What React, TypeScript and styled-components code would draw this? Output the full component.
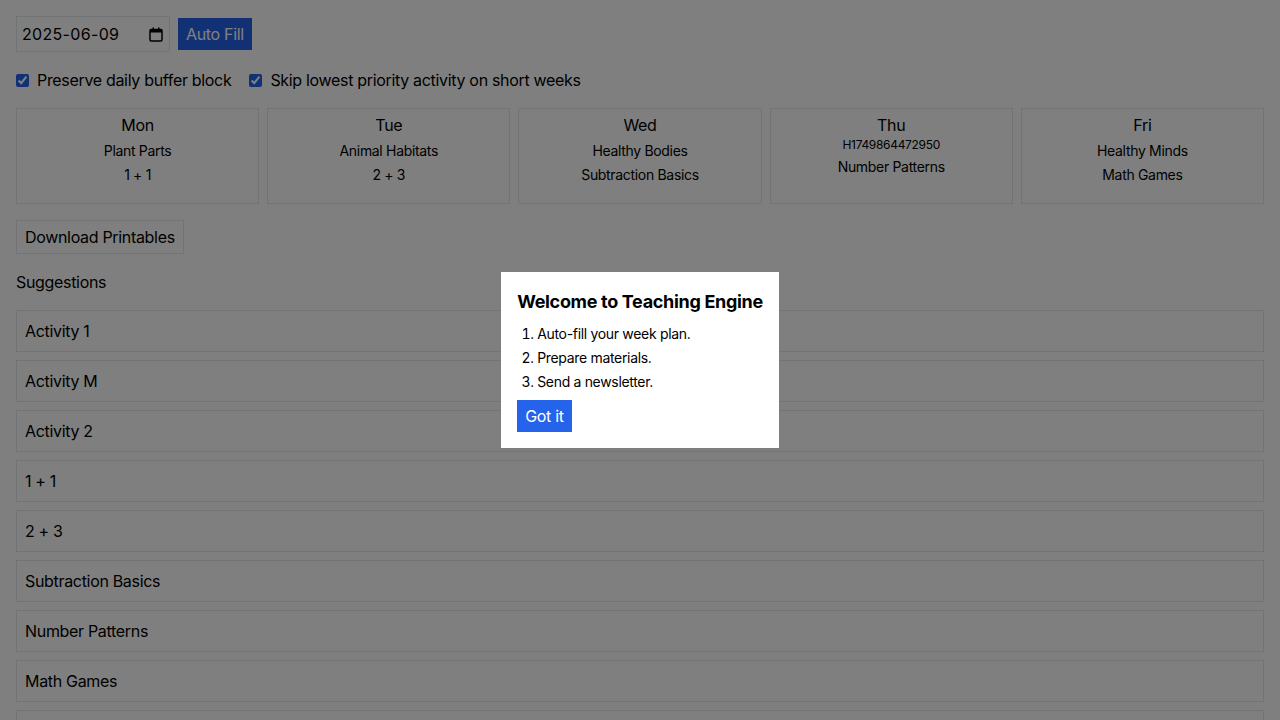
import React from "react";
import styled, { createGlobalStyle } from "styled-components";

const Global = createGlobalStyle`
  *, *::before, *::after { box-sizing: border-box; }
  html, body { margin: 0; padding: 0; }
  body {
    font-family: Inter, "Noto Sans", "Liberation Sans", sans-serif;
    font-size: 16px;
    line-height: 24px;
    letter-spacing: -0.02em;
    color: #000;
    background: #fff;
  }
  button, input { font-family: inherit; letter-spacing: inherit; margin: 0; }
`;

const Page = styled.div`
  padding: 16px;
  display: flex;
  flex-direction: column;
  gap: 16px;
`;

const Toolbar = styled.div`
  display: flex;
  align-items: center;
  gap: 8px;
`;

const DateField = styled.label`
  width: 154px;
  height: 36px;
  border: 1px solid #e5e7eb;
  padding: 0 6px 0 5px;
  display: flex;
  align-items: center;
  justify-content: space-between;
  background: #fff;
`;

const DateText = styled.input`
  width: 110px;
  border: none;
  outline: none;
  padding: 0;
  font-size: 16px;
  line-height: 24px;
  letter-spacing: 0.02em;
  color: #000;
  background: transparent;
`;

const CalendarIcon = styled.svg`
  width: 14px;
  height: 15px;
  flex: none;
`;

const PrimaryButton = styled.button`
  background: #2563eb;
  color: #fff;
  border: none;
  padding: 4px 8px;
  font-size: 16px;
  line-height: 24px;
  cursor: pointer;
`;

const Options = styled.div`
  display: flex;
  align-items: center;
  gap: 18px;
`;

const OptionLabel = styled.label`
  display: flex;
  align-items: center;
  gap: 8px;
  font-size: 16px;
  line-height: 24px;
`;

const Check = styled.input`
  width: 13px;
  height: 13px;
  accent-color: #2563eb;
`;

const Week = styled.div`
  display: grid;
  grid-template-columns: repeat(5, 1fr);
  gap: 8px;
`;

const DayCard = styled.div`
  border: 1px solid #e5e7eb;
  min-height: 96px;
  padding: 4px;
  text-align: center;
`;

const DayName = styled.div`
  font-size: 16px;
  line-height: 24px;
`;

const DayItem = styled.div`
  font-size: 14px;
  line-height: 20px;
  margin-top: 4px;
`;

const DayCode = styled.div`
  font-size: 12px;
  line-height: 16px;
`;

const OutlineButton = styled.button`
  align-self: flex-start;
  background: #fff;
  color: #000;
  border: 1px solid #e5e7eb;
  padding: 4px 8px;
  font-size: 16px;
  line-height: 24px;
`;

const Heading = styled.h2`
  margin: 0;
  font-size: 16px;
  line-height: 24px;
  font-weight: 400;
`;

const SuggestionList = styled.ul`
  list-style: none;
  margin: 0;
  padding: 0;
  display: flex;
  flex-direction: column;
  gap: 8px;
`;

const SuggestionRow = styled.li`
  border: 1px solid #e5e7eb;
  padding: 8px;
  font-size: 16px;
  line-height: 24px;
`;

const Overlay = styled.div`
  position: fixed;
  inset: 0;
  background: rgba(0, 0, 0, 0.5);
  display: flex;
  align-items: center;
  justify-content: center;
`;

const Modal = styled.div`
  background: #fff;
  padding: 16px;
`;

const ModalTitle = styled.h2`
  margin: 0 0 8px;
  font-size: 18px;
  line-height: 28px;
  font-weight: 700;
`;

const Steps = styled.ol`
  margin: 0 0 8px;
  padding-left: 20px;
  display: flex;
  flex-direction: column;
  gap: 4px;
  font-size: 14px;
  line-height: 20px;
`;

type Day = { name: string; code?: string; items: string[] };

const days: Day[] = [
  { name: "Mon", items: ["Plant Parts", "1 + 1"] },
  { name: "Tue", items: ["Animal Habitats", "2 + 3"] },
  { name: "Wed", items: ["Healthy Bodies", "Subtraction Basics"] },
  { name: "Thu", code: "H1749864472950", items: ["Number Patterns"] },
  { name: "Fri", items: ["Healthy Minds", "Math Games"] },
];

const suggestions = [
  "Activity 1",
  "Activity M",
  "Activity 2",
  "1 + 1",
  "2 + 3",
  "Subtraction Basics",
  "Number Patterns",
  "Math Games",
  "Plant Parts",
];

export default function App() {
  return (
    <>
      <Global />
      <Page>
        <Toolbar>
          <DateField>
            <DateText type="text" defaultValue="2025-06-09" readOnly />
            <CalendarIcon viewBox="0 0 14 15" fill="none">
              <rect x="1" y="2.5" width="12" height="11.5" rx="1.2" stroke="#000" strokeWidth="1.5" />
              <rect x="1" y="2.5" width="12" height="3" fill="#000" />
              <rect x="3.5" y="0.5" width="1.5" height="3" fill="#000" />
              <rect x="9" y="0.5" width="1.5" height="3" fill="#000" />
            </CalendarIcon>
          </DateField>
          <PrimaryButton>Auto Fill</PrimaryButton>
        </Toolbar>
        <Options>
          <OptionLabel>
            <Check type="checkbox" defaultChecked />
            Preserve daily buffer block
          </OptionLabel>
          <OptionLabel>
            <Check type="checkbox" defaultChecked />
            Skip lowest priority activity on short weeks
          </OptionLabel>
        </Options>
        <Week>
          {days.map((d) => (
            <DayCard key={d.name}>
              <DayName>{d.name}</DayName>
              {d.code && <DayCode>{d.code}</DayCode>}
              {d.items.map((it) => (
                <DayItem key={it}>{it}</DayItem>
              ))}
            </DayCard>
          ))}
        </Week>
        <OutlineButton>Download Printables</OutlineButton>
        <Heading>Suggestions</Heading>
        <SuggestionList>
          {suggestions.map((s) => (
            <SuggestionRow key={s}>{s}</SuggestionRow>
          ))}
        </SuggestionList>
      </Page>
      <Overlay>
        <Modal>
          <ModalTitle>Welcome to Teaching Engine</ModalTitle>
          <Steps>
            <li>Auto-fill your week plan.</li>
            <li>Prepare materials.</li>
            <li>Send a newsletter.</li>
          </Steps>
          <PrimaryButton>Got it</PrimaryButton>
        </Modal>
      </Overlay>
    </>
  );
}
